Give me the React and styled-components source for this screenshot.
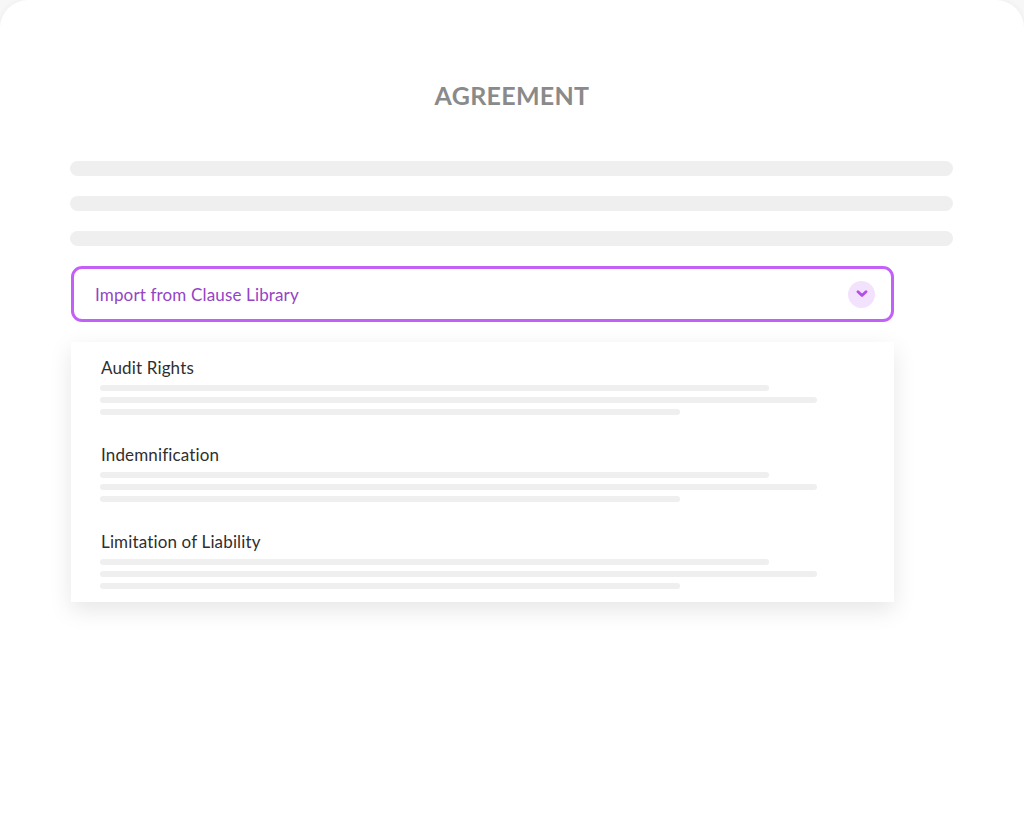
import React from "react";
import styled, { createGlobalStyle } from "styled-components";

const GlobalStyle = createGlobalStyle`
  html, body {
    margin: 0;
    padding: 0;
    background: #f7f7f7;
  }
  * {
    box-sizing: border-box;
  }
`;

const Card = styled.div`
  width: 1024px;
  height: 839px;
  background: #ffffff;
  border-radius: 28px 28px 0 0;
  box-shadow: 0 0 6px rgba(0, 0, 0, 0.05);
  padding: 80px 70px 0 70px;
  font-family: Lato, "Open Sans", sans-serif;
`;

const Title = styled.h1`
  margin: 0 0 50px 0;
  text-align: center;
  font-size: 25px;
  line-height: 31px;
  font-weight: 700;
  color: #8a8a8a;
  letter-spacing: 0.3px;
`;

const Lines = styled.div`
  display: flex;
  flex-direction: column;
  gap: 20px;
  margin-bottom: 20px;
`;

const Bar = styled.div`
  height: ${(p) => p.$h}px;
  width: ${(p) => p.$w};
  border-radius: 999px;
  background: #efefef;
`;

const Select = styled.div`
  width: 823px;
  height: 56px;
  margin-left: 1px;
  border: 3px solid #c260f7;
  border-radius: 11px;
  display: flex;
  align-items: center;
  justify-content: space-between;
  padding: 0 16px 0 21px;
`;

const SelectLabel = styled.span`
  font-size: 17px;
  letter-spacing: 0.15px;
  color: #9444c6;
`;

const Chevron = styled.div`
  width: 27px;
  height: 27px;
  border-radius: 50%;
  background: #f3e2fd;
  display: flex;
  align-items: center;
  justify-content: center;
`;

const Panel = styled.div`
  width: 823px;
  margin: 20px 0 0 1px;
  background: #ffffff;
  box-shadow: 0 8px 22px rgba(0, 0, 0, 0.1);
  padding: 16px 30px 13px 29px;
  display: flex;
  flex-direction: column;
  gap: 30px;
`;

const Clause = styled.div`
  display: flex;
  flex-direction: column;
`;

const ClauseTitle = styled.div`
  font-size: 17px;
  line-height: 20px;
  letter-spacing: 0.15px;
  color: #2f2f2f;
  margin: 0 0 7px 1px;
`;

const ClauseLines = styled.div`
  display: flex;
  flex-direction: column;
  gap: 6px;
`;

const clauses = ["Audit Rights", "Indemnification", "Limitation of Liability"];

const App = () => {
  return (
    <>
      <GlobalStyle />
      <Card>
        <Title>AGREEMENT</Title>
        <Lines>
          <Bar $h={15} $w="883px" />
          <Bar $h={15} $w="883px" />
          <Bar $h={15} $w="883px" />
        </Lines>
        <Select>
          <SelectLabel>Import from Clause Library</SelectLabel>
          <Chevron>
            <svg width="12" height="8" viewBox="0 0 12 8" fill="none">
              <path
                d="M2 1.8l4 3.7L10 1.8"
                stroke="#b64de9"
                strokeWidth="2.8"
                strokeLinecap="round"
                strokeLinejoin="round"
              />
            </svg>
          </Chevron>
        </Select>
        <Panel>
          {clauses.map((c) => (
            <Clause key={c}>
              <ClauseTitle>{c}</ClauseTitle>
              <ClauseLines>
                <Bar $h={6} $w="669px" />
                <Bar $h={6} $w="717px" />
                <Bar $h={6} $w="580px" />
              </ClauseLines>
            </Clause>
          ))}
        </Panel>
      </Card>
    </>
  );
};

export default App;
